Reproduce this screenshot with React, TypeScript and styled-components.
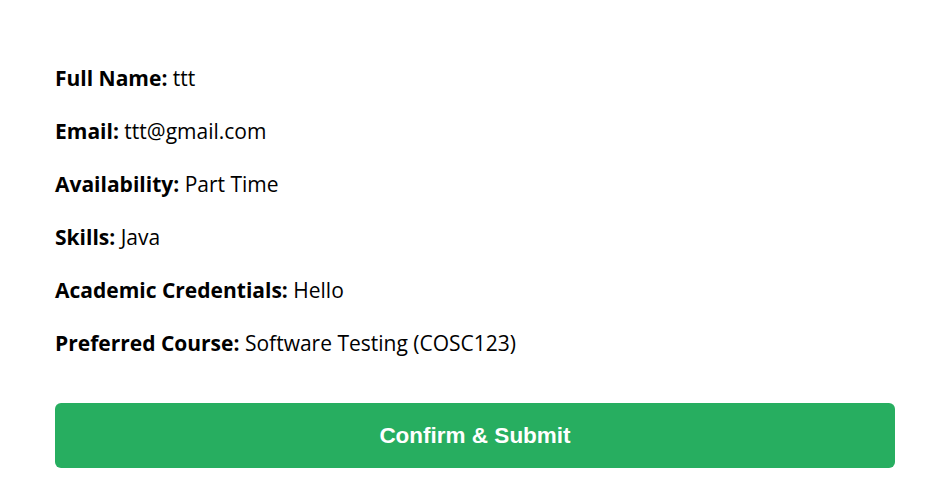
import React from 'react';
import styled, { createGlobalStyle } from 'styled-components';

const GlobalStyle = createGlobalStyle`
    body {
        margin: 0;
        background: #FFF;
        font-family: "Open Sans", "Noto Sans", sans-serif;
        color: #000;
    }
`;

const Container = styled.div`
    padding: 62px 32px 23px 55px;
`;

const Field = styled.p`
    margin: 0 0 21px;
    font-size: 21px;
    line-height: 32px;

    strong {
        font-weight: 700;
    }
`;

const SubmitButton = styled.button`
    display: block;
    width: 100%;
    height: 65px;
    margin-top: 44px;
    border: none;
    border-radius: 6px;
    background-color: #27AE60;
    color: #FFF;
    font-family: "Liberation Sans", Arial, sans-serif;
    font-size: 22.5px;
    font-weight: 700;
    cursor: pointer;
`;

const details = [
    { label: 'Full Name', value: 'ttt' },
    { label: 'Email', value: 'ttt@gmail.com' },
    { label: 'Availability', value: 'Part Time' },
    { label: 'Skills', value: 'Java' },
    { label: 'Academic Credentials', value: 'Hello' },
    { label: 'Preferred Course', value: 'Software Testing (COSC123)' },
];

const App = () => {
    return (
        <>
            <GlobalStyle />
            <Container>
                {details.map((item) => (
                    <Field key={item.label}>
                        <strong>{item.label}:</strong> {item.value}
                    </Field>
                ))}
                <SubmitButton>Confirm &amp; Submit</SubmitButton>
            </Container>
        </>
    );
};

export default App;
